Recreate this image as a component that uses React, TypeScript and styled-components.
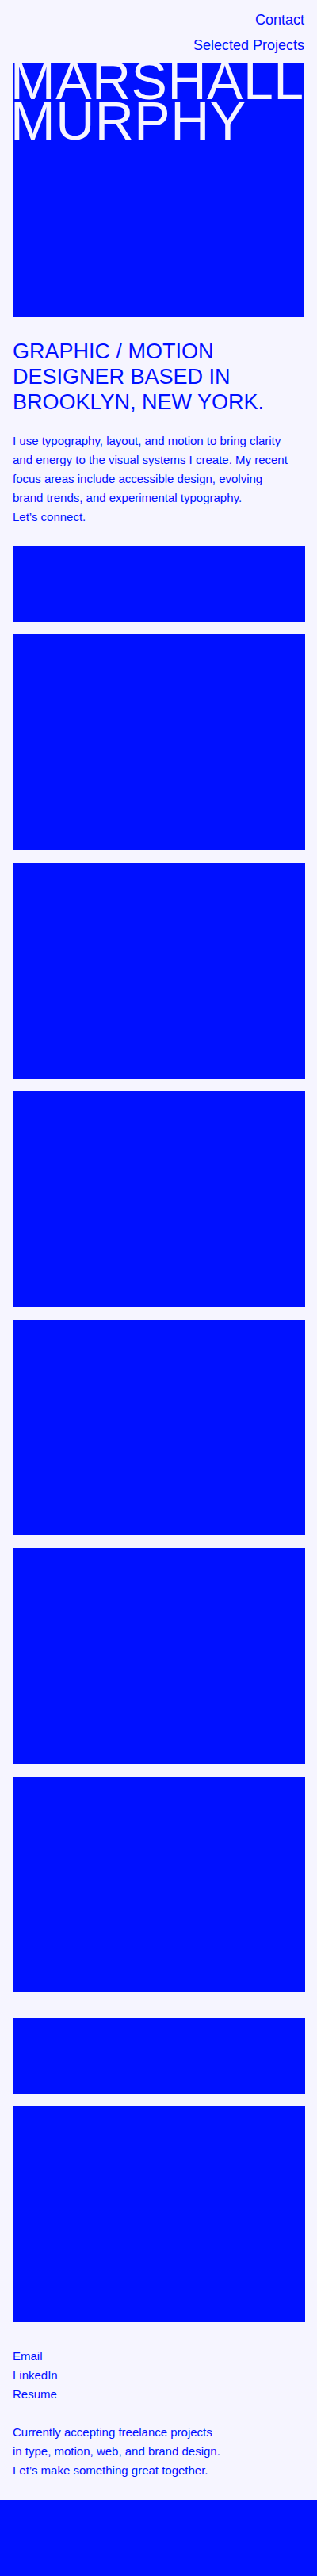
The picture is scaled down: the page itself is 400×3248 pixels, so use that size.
import React from 'react';
import styled, { createGlobalStyle } from 'styled-components';

const BLUE = '#0010ff';
const PAPER = '#f6f5ff';

const GlobalStyle = createGlobalStyle`
  * {
    box-sizing: border-box;
  }
  html, body {
    margin: 0;
    padding: 0;
    background: ${PAPER};
  }
  body {
    font-family: 'Liberation Sans', Arial, Helvetica, sans-serif;
    color: ${BLUE};
  }
  a {
    color: inherit;
    text-decoration: none;
  }
`;

const Page = styled.div`
  display: flex;
  flex-direction: column;
`;

const Nav = styled.nav`
  display: flex;
  flex-direction: column;
  align-items: flex-end;
  padding: 9px 16px 7px;
`;

const NavLink = styled.a`
  font-size: 18px;
  line-height: 32px;
`;

const Hero = styled.div`
  margin: 0 16px;
  height: 320px;
  background: ${BLUE};
  overflow: hidden;
`;

const HeroName = styled.h1`
  margin: -4px 0 0 -3px;
  font-size: 68px;
  font-weight: 400;
  line-height: 51px;
  letter-spacing: 0.5px;
  color: ${PAPER};
  white-space: nowrap;
`;

const Intro = styled.section`
  display: flex;
  flex-direction: column;
  gap: 21px;
  padding: 27px 16px 24px;
`;

const Headline = styled.h2`
  margin: 0;
  font-size: 27px;
  font-weight: 400;
  line-height: 32px;
`;

const Body = styled.p`
  margin: 0;
  font-size: 15px;
  line-height: 24px;
`;

const Projects = styled.section<{ $last?: boolean }>`
  display: flex;
  flex-direction: column;
  gap: 16px;
  margin: 0 15px ${(p) => (p.$last ? '31px' : '32px')} 16px;
`;

const Tile = styled.div<{ $h: number }>`
  height: ${(p) => p.$h}px;
  background: ${BLUE};
`;

const Contact = styled.section`
  display: flex;
  flex-direction: column;
  gap: 24px;
  padding: 0 16px 25px;
`;

const LinkList = styled.div`
  display: flex;
  flex-direction: column;
`;

const ContactLink = styled.a`
  font-size: 15px;
  line-height: 24px;
`;

const Footer = styled.footer`
  height: 96px;
  background: ${BLUE};
`;

const firstSet = [96, 272, 272, 272, 272, 272, 272];
const secondSet = [96, 272];

export default function App() {
  return (
    <Page>
      <GlobalStyle />
      <Nav>
        <NavLink href="#contact">Contact</NavLink>
        <NavLink href="#projects">Selected Projects</NavLink>
      </Nav>
      <Hero>
        <HeroName>
          MARSHALL
          <br />
          MURPHY
        </HeroName>
      </Hero>
      <Intro>
        <Headline>
          GRAPHIC / MOTION
          <br />
          DESIGNER BASED IN
          <br />
          BROOKLYN, NEW YORK.
        </Headline>
        <Body>
          I use typography, layout, and motion to bring clarity
          <br />
          and energy to the visual systems I create. My recent
          <br />
          focus areas include accessible design, evolving
          <br />
          brand trends, and experimental typography.
          <br />
          Let’s connect.
        </Body>
      </Intro>
      <Projects id="projects">
        {firstSet.map((h, i) => (
          <Tile key={i} $h={h} />
        ))}
      </Projects>
      <Projects $last>
        {secondSet.map((h, i) => (
          <Tile key={i} $h={h} />
        ))}
      </Projects>
      <Contact id="contact">
        <LinkList>
          <ContactLink href="#">Email</ContactLink>
          <ContactLink href="#">LinkedIn</ContactLink>
          <ContactLink href="#">Resume</ContactLink>
        </LinkList>
        <Body>
          Currently accepting freelance projects
          <br />
          in type, motion, web, and brand design.
          <br />
          Let’s make something great together.
        </Body>
      </Contact>
      <Footer />
    </Page>
  );
}
